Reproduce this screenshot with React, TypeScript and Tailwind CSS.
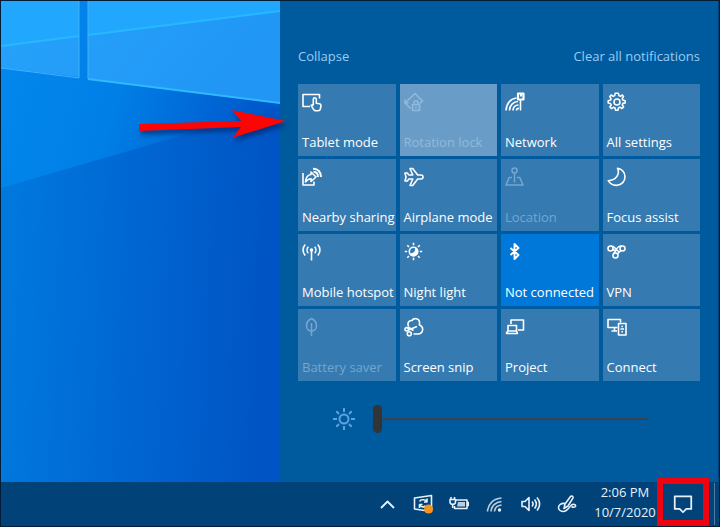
import { useState } from "react";
import type { ReactNode } from "react";
import clsx from "clsx";

type TileState = "normal" | "disabled" | "locked" | "active";

interface Tile {
  label: string;
  state?: TileState;
  icon: ReactNode;
}

const tiles: Tile[] = [
  {
    label: "Tablet mode",
    icon: (
      <>
        <path d="M8 14.500H1V2.500H17.500V6.500" />
        <path d="M11.300 13.500V7.300a1.500 1.500 0 0 1 3 0v3.900l3.200.6c1.200.3 1.600 1.100 1.400 2.200l-.5 2.800c-.3 1.400-1.100 2-2.400 2h-2c-1.200 0-1.900-.5-2.500-1.500l-2.300-4c1-.9 1.500-.5 2.100.2" />
      </>
    ),
  },
  {
    label: "Rotation lock",
    state: "locked",
    icon: (
      <>
        <path d="M6.500 16.500 1 11 11 1.500l7.500 7.500-2.500 2.500M1 7.500V11h3.500" />
        <path d="M8.500 12.500h7V18.500h-7zM10 12.500v-1.800a2 2 0 0 1 4 0v1.800M12 14.500v2" />
      </>
    ),
  },
  {
    label: "Network",
    icon: (
      <>
        <path d="M1 18.500C1.500 11 6 6.500 11.500 6M4.500 18.500c0-5 4-9 8.500-9M8 18.500c0-3.200 2.200-5.500 5.500-5.500M11.500 18.500c0-1.600 1-2.300 2.500-2.300" />
        <path d="M15.500 8v10.500" />
        <path d="M13 1.500h5.500V7.500H13zM15 3.500h2" strokeWidth="2.200" />
      </>
    ),
  },
  {
    label: "All settings",
    icon: (
      <>
        <circle cx="10" cy="10" r="3" />
        <path d="m8.200 1.300-.5 2.300-1.500.7-2-1.300-1.500 1.600 1.400 2-.6 1.500-2.300.6v2.300l2.300.5.7 1.500-1.300 2 1.600 1.600 2-1.300 1.500.6.6 2.300h2.300l.6-2.300 1.500-.7 2 1.300 1.600-1.600-1.300-2 .6-1.500 2.300-.5V8.700l-2.300-.6-.7-1.500 1.300-2L15.400 3l-2 1.300-1.500-.7-.5-2.300z" />
      </>
    ),
  },
  {
    label: "Nearby sharing",
    icon: (
      <>
        <path d="M1 6V18H12V14.500" />
        <path d="M3.500 15C4 10 6 7.700 9 7.500V5l5 5-5 4.500v-2.700c-2.200 0-3.700.9-5.500 3.200z" />
        <path d="M11.500 4.800c2.700.2 4.500 2.200 4.500 5.200" strokeWidth="2" />
        <path d="M11 1.800c5-.3 8 3.500 8 8.200" strokeWidth="2" />
      </>
    ),
  },
  {
    label: "Airplane mode",
    icon: (
      <path d="M1 6h2.300l1.700 2h3.800L6 1.500h2.700L13.700 8h3.300c1.200 0 2 .9 2 2s-.8 2-2 2h-3.300L8.700 18.500H6L8.800 12H5l-1.700 2H1l1-4z" />
    ),
  },
  {
    label: "Location",
    state: "disabled",
    icon: (
      <>
        <circle cx="9.500" cy="3.500" r="2.500" />
        <path d="M9.500 6v9.500M7 10.500H4.200L1 18h17l-3.200-7.500H12" />
      </>
    ),
  },
  {
    label: "Focus assist",
    icon: (
      <path d="M10.500 1.200c2.500 5-.5 12-9.300 12.500 2 3.300 5.200 4.900 8.600 4.700 4.900-.3 8.200-4.100 8.200-8.700 0-4.300-3.200-7.900-7.500-8.500z" />
    ),
  },
  {
    label: "Mobile hotspot",
    icon: (
      <>
        <circle cx="9.500" cy="8" r="1" />
        <path d="M9.500 9V18.500M6.300 4.700c-1.600 1.800-1.600 4.800 0 6.600M12.700 4.700c1.600 1.800 1.600 4.800 0 6.600M3.300 2.500C.3 5.500.3 10.500 3.300 13.500M15.700 2.500c3 3 3 8 0 11" />
      </>
    ),
  },
  {
    label: "Night light",
    icon: (
      <>
        <circle cx="9.500" cy="9.500" r="4.200" />
        <path d="M12 6.500c0 4-2 5.500-5.500 5.800 3 2.700 7.200.7 7-3.300-.1-1-.7-1.900-1.500-2.500z" fill="currentColor" />
        <path d="M9.500.8v2.400M9.500 15.800v2.400M.8 9.500h2.400M15.800 9.500h2.400M3.300 3.300 5 5M14 14l1.700 1.700M15.700 3.300 14 5M5 14l-1.700 1.700" />
      </>
    ),
  },
  {
    label: "Not connected",
    state: "active",
    icon: <path d="m5.500 6 8 7-4 4V2l4 4-8 7" strokeWidth="1.900" />,
  },
  {
    label: "VPN",
    icon: (
      <>
        <circle cx="3.500" cy="6.500" r="2.500" />
        <circle cx="15.500" cy="6.500" r="2.500" />
        <circle cx="8.500" cy="13.500" r="2.500" />
        <path d="M4.500 4c4 0 4 5 7.500 5.500M15 4C9.500 3.500 10 8 6.800 11.500M10.300 11.800 14 8.500M5.800 7.500l2.500 1.500" />
      </>
    ),
  },
  {
    label: "Battery saver",
    state: "disabled",
    icon: (
      <path d="M9.500 6v13M9.500 1.500c3 1.500 5 4 5 7s-2 5.500-5 5.500-5-2.500-5-5.500 2-5.500 5-7z" />
    ),
  },
  {
    label: "Screen snip",
    icon: (
      <>
        <path d="M4.500 9.500C3 6 5 3 8 3.500c1.800-3 7-2.300 7.500 1.500.1.900.1 1.700-.2 2.700 5.200 2.300 4 9.300-1.300 9.300H9.500" />
        <path d="m4.500 13 8.500-3.500M4 10l5.500 3.500" />
        <circle cx="2.700" cy="12.300" r="1.700" />
        <circle cx="5.300" cy="16.700" r="2" />
      </>
    ),
  },
  {
    label: "Project",
    icon: (
      <>
        <path d="M6 7V3h12.500V13H13" />
        <path d="M3 8.500h8.500V14H3zM1 16.500h11.500L11.500 14M1 16.500 3 14" />
      </>
    ),
  },
  {
    label: "Connect",
    icon: (
      <>
        <path d="M10.500 10.500H1V2.500h12.500v3M4.500 14H10M7.500 10.500V14" />
        <path d="M11.500 6.500H19v11.500h-7.500zM13.500 12h3.500M15.200 8.800v1.500M15.200 14v1.500" />
      </>
    ),
  },
];

const trayIcons: { name: string; icon: ReactNode }[] = [
  { name: "Show hidden icons", icon: <path d="m4 14 6.500-6.500L17 14" strokeWidth="1.800" /> },
  {
    name: "Windows Update",
    icon: (
      <>
        <path d="m1.500 4 17-2.500v16L1.500 15z" />
        <path d="M6.500 7.500c1-2 6-2.500 7 0M14 4.500V8h-3M6.500 14v-3.500h3M6.500 10.500c1 2.500 4 3 6 1.500" />
        <circle cx="15.500" cy="15" r="4.500" fill="#f7941d" stroke="none" />
      </>
    ),
  },
  {
    name: "Battery",
    icon: (
      <>
        <path d="M7 6h11v8.500H5.500V12M18.500 8.500h1v3h-1" />
        <path d="M9 8h7V12.500H8z" fill="currentColor" fillOpacity="0.8" stroke="none" />
        <path d="M2 3v2M5.500 3v2M1 5.500h5.500V8c0 1.500-1 2.300-2.700 2.300S1 9.500 1 8zM3.700 10.500V14" />
      </>
    ),
  },
  {
    name: "Wi-Fi",
    icon: (
      <>
        <path d="M2.500 17.500C3 10 8.500 4.500 16.500 4M6 17.500c.3-5.500 4.500-9.500 10.500-10M9.500 17.500c.3-3.500 3-6 7-6.500" opacity="0.8" />
        <circle cx="14.500" cy="16" r="1.700" fill="currentColor" stroke="none" />
      </>
    ),
  },
  {
    name: "Volume",
    icon: (
      <path d="M1 7.500H4l4-4v13l-4-4H1zM11 7.500c1.300 1.500 1.300 3.500 0 5M13.500 5.500c2.300 2.800 2.300 6.200 0 9M16 3.500c3.200 4 3.200 9 0 13" />
    ),
  },
  {
    name: "Windows Ink Workspace",
    icon: (
      <path d="m7 14.500 1-4.500 5.500-7.500c1-1.200 3 0 2.400 1.600L11 12zM8 9.500c-4-.5-6.500 1.500-6.500 4S4 17.500 6.500 17.500c4 0 5-4 8-6.500 2-1.500 4.500-.3 4 1.200-.5 1.300-2.500 1.300-4 .3" />
    ),
  },
];

function Icon({ children, className }: { children: ReactNode; className?: string }) {
  return (
    <svg
      viewBox="0 0 20 20"
      className={clsx("shrink-0", className)}
      fill="none"
      stroke="currentColor"
      strokeWidth="1.600"
      strokeLinejoin="round"
      aria-hidden="true"
    >
      {children}
    </svg>
  );
}

function QuickAction({ label, state = "normal", icon }: Tile) {
  return (
    <button
      type="button"
      disabled={state === "disabled" || state === "locked"}
      className={clsx(
        "flex h-[72px] flex-col items-start justify-between px-1 pt-2 pb-[6px] text-[13px] leading-4 whitespace-nowrap",
        state === "normal" && "bg-[#357ab1] text-white",
        state === "disabled" && "bg-[#357ab1] text-[#74a6cf]",
        state === "locked" && "bg-[#699dc7] text-[#92b9da]",
        state === "active" && "bg-[#0078d9] text-white"
      )}
    >
      <Icon className="size-5">{icon}</Icon>
      <span>{label}</span>
    </button>
  );
}

function Wallpaper() {
  return (
    <svg
      viewBox="0 0 279 481"
      preserveAspectRatio="none"
      className="absolute inset-0 size-full"
      aria-hidden="true"
    >
      <defs>
        <linearGradient id="base" x1="0" y1="0" x2="1" y2="0.08">
          <stop offset="0" stopColor="#007bdf" />
          <stop offset="0.5" stopColor="#0067d2" />
          <stop offset="1" stopColor="#0054c4" />
        </linearGradient>
        <linearGradient id="beam" x1="0" y1="0" x2="1" y2="0.2">
          <stop offset="0" stopColor="#0389ee" />
          <stop offset="0.5" stopColor="#007fe6" />
          <stop offset="1" stopColor="#0059cc" />
        </linearGradient>
        <linearGradient id="pane" x1="0" y1="0" x2="1" y2="0.3">
          <stop offset="0" stopColor="#26a3fb" />
          <stop offset="1" stopColor="#2196f5" />
        </linearGradient>
      </defs>
      <rect width="279" height="481" fill="url(#base)" />
      <path d="M0 0H279V106L0 187z" fill="url(#beam)" />
      <path d="M0 0H78V76L0 67zM87 0H279V102L87 78z" fill="url(#pane)" />
      <path d="M0 0H78V35L0 45zM87 0H279V10L87 34z" fill="#22a7ff" />
      <path d="M0 45 78 35M87 34 279 10" stroke="#27b9ff" strokeWidth="2" fill="none" />
      <path d="M0 67 78 77V0M87 0V78" stroke="#42b0fb" fill="none" />
      <path d="M87 78 279 102" stroke="#2fb9ff" strokeWidth="2" />
    </svg>
  );
}

export default function App() {
  const [brightness, setBrightness] = useState(0);

  return (
    <div className="relative flex min-h-screen flex-col border border-[#031d38] bg-[#014379] font-['Open_Sans','Noto_Sans',sans-serif]">
      <main className="flex flex-1">
        {/* Desktop */}
        <div className="relative flex-1">
          <Wallpaper />
        </div>

        {/* Action center */}
        <section className="flex w-[439px] max-w-full flex-col border-r border-[#013f78] bg-[#005a9e] px-[18px] pt-[47px]">
          <div className="mb-5 flex justify-between text-[13px] leading-4 text-[#9ccbf3]">
            <button type="button">Collapse</button>
            <button type="button">Clear all notifications</button>
          </div>

          <div className="grid grid-cols-4 gap-x-1 gap-y-[3px]">
            {tiles.map((tile) => (
              <QuickAction key={tile.label} {...tile} />
            ))}
          </div>

          <div className="mt-6 flex items-center gap-[18px] pr-[52px] pl-[35px]">
            <svg
              viewBox="0 0 22 22"
              className="size-[22px] shrink-0 text-[#5ba3e0]"
              fill="none"
              stroke="currentColor"
              strokeWidth="2"
              aria-hidden="true"
            >
              <circle cx="11" cy="11" r="4.500" />
              <path d="M11 0v4M11 18v4M0 11h4M18 11h4M3.300 3.300 6 6M16 16l2.700 2.700M18.700 3.300 16 6M6 16l-2.700 2.700" />
            </svg>
            <input
              type="range"
              aria-label="Brightness"
              min={0}
              max={100}
              value={brightness}
              onChange={(e) => setBrightness(Number(e.target.value))}
              className="h-7 min-w-0 flex-1 appearance-none bg-transparent [&::-webkit-slider-runnable-track]:h-[2px] [&::-webkit-slider-runnable-track]:bg-[#3a4450] [&::-webkit-slider-thumb]:-mt-[13px] [&::-webkit-slider-thumb]:h-7 [&::-webkit-slider-thumb]:w-[9px] [&::-webkit-slider-thumb]:appearance-none [&::-webkit-slider-thumb]:rounded-full [&::-webkit-slider-thumb]:bg-[#333435]"
            />
          </div>
        </section>
      </main>

      {/* Taskbar */}
      <footer className="flex h-11 items-stretch justify-end text-[#e8f1f9]">
        <div className="mr-4 flex items-center gap-4">
          {trayIcons.map(({ name, icon }) => (
            <button key={name} type="button" aria-label={name}>
              <Icon className="size-5">{icon}</Icon>
            </button>
          ))}
        </div>
        <button type="button" className="w-16 pb-1 text-center text-[13px] leading-5">
          <span className="block">2:06 PM</span>
          <span className="block">10/7/2020</span>
        </button>
        <button
          type="button"
          aria-label="Notifications"
          className="relative flex w-[52px] items-center justify-center"
        >
          <Icon className="size-[22px]">
            <path d="M2.500 3h15v11.500H13L10 17.500 7 14.500H2.500z" />
          </Icon>
          <span className="absolute inset-x-0 -top-1 bottom-0 border-[6px] border-[#ee0410]" />
        </button>
        <div className="my-px mr-1 ml-[5px] w-px bg-[#4d7ba3]" />
      </footer>

      {/* Callout arrow */}
      <svg
        viewBox="0 0 150 40"
        className="absolute top-[100px] right-[431px] h-10 w-[150px] drop-shadow-[2px_4px_2px_rgba(0,20,80,0.5)]"
        aria-hidden="true"
      >
        <path d="M1 23 103 20 94 9 148 20 94 37 103 26 1 30z" fill="#fb0505" />
      </svg>
    </div>
  );
}
